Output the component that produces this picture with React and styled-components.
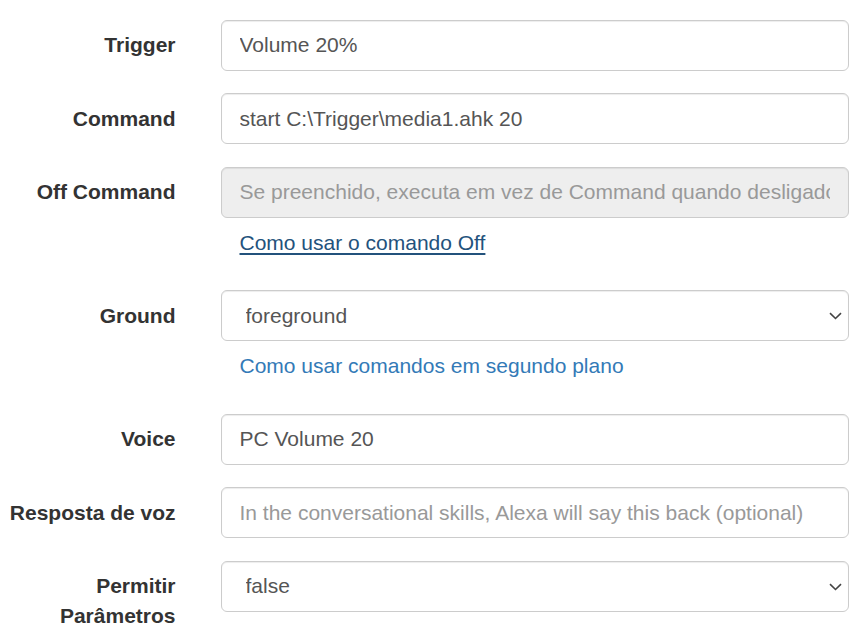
import React from "react";
import styled, { createGlobalStyle } from "styled-components";

const GlobalStyle = createGlobalStyle`
	html, body {
		margin: 0;
		padding: 0;
		background: #fff;
	}
	body {
		font-family: "Liberation Sans", Arial, Helvetica, sans-serif;
		font-size: 21px;
		line-height: 30px;
		color: #333;
	}
	* {
		box-sizing: border-box;
	}
`;

const Form = styled.form`
	padding: 19.5px 13px 0 0;
`;

const FormGroup = styled.div`
	display: grid;
	grid-template-columns: 198px 1fr;
	margin-bottom: 22.5px;
`;

const Label = styled.label`
	padding: 10.5px 22.5px 0 0;
	text-align: right;
	font-weight: 700;
	line-height: 30px;
	color: #333;
`;

const Field = styled.div`
	position: relative;
	padding-left: 22.5px;
`;

const Input = styled.input`
	display: block;
	width: 100%;
	height: 51px;
	padding: 9px 18px;
	font-family: inherit;
	font-size: 21px;
	line-height: 30px;
	color: #555;
	background-color: ${(p) => (p.disabled ? "#eee" : "#fff")};
	border: 1px solid #ccc;
	border-radius: 6px;
	box-shadow: inset 0 1px 1px rgba(0, 0, 0, 0.075);
	outline: none;
	opacity: 1;

	&::placeholder {
		color: #999;
		opacity: 1;
	}
`;

const Select = styled.select`
	display: block;
	width: 100%;
	height: 51px;
	padding: 9px 40px 9px 24px;
	font-family: inherit;
	font-size: 21px;
	line-height: 30px;
	color: #555;
	background-color: #fff;
	border: 1px solid #ccc;
	border-radius: 6px;
	box-shadow: inset 0 1px 1px rgba(0, 0, 0, 0.075);
	outline: none;
	appearance: none;
	-webkit-appearance: none;
`;

const Chevron = styled.svg`
	position: absolute;
	right: 7px;
	top: 22px;
	width: 13px;
	height: 8px;
	pointer-events: none;
`;

const HelpLink = styled.a`
	display: inline-block;
	margin: 10px 0 10px 19px;
	font-size: 21px;
	line-height: 30px;
	color: ${(p) => (p.$visited ? "#23527c" : "#337ab7")};
	text-decoration: ${(p) => (p.$visited ? "underline" : "none")};
	text-underline-offset: 3px;
`;

const SelectField = ({ value, options }) => (
	<Field>
		<Select defaultValue={value}>
			{options.map((o) => (
				<option key={o} value={o}>
					{o}
				</option>
			))}
		</Select>
		<Chevron viewBox="0 0 13 8">
			<path d="M1 1.2 L6.5 6.5 L12 1.2" fill="none" stroke="#444" strokeWidth="1.6" />
		</Chevron>
	</Field>
);

const App = () => {
	return (
		<>
			<GlobalStyle />
			<Form>
				<FormGroup>
					<Label>Trigger</Label>
					<Field>
						<Input defaultValue="Volume 20%" />
					</Field>
				</FormGroup>

				<FormGroup>
					<Label>Command</Label>
					<Field>
						<Input defaultValue="start C:\Trigger\media1.ahk 20" />
					</Field>
				</FormGroup>

				<FormGroup>
					<Label>Off Command</Label>
					<Field>
						<Input
							disabled
							placeholder="Se preenchido, executa em vez de Command quando desligado"
						/>
						<HelpLink href="#off" $visited>
							Como usar o comando Off
						</HelpLink>
					</Field>
				</FormGroup>

				<FormGroup>
					<Label>Ground</Label>
					<div>
						<SelectField value="foreground" options={["foreground", "background"]} />
						<Field>
							<HelpLink href="#ground">Como usar comandos em segundo plano</HelpLink>
						</Field>
					</div>
				</FormGroup>

				<FormGroup>
					<Label>Voice</Label>
					<Field>
						<Input defaultValue="PC Volume 20" />
					</Field>
				</FormGroup>

				<FormGroup>
					<Label>Resposta de voz</Label>
					<Field>
						<Input placeholder="In the conversational skills, Alexa will say this back (optional)" />
					</Field>
				</FormGroup>

				<FormGroup>
					<Label>Permitir Parâmetros</Label>
					<SelectField value="false" options={["false", "true"]} />
				</FormGroup>
			</Form>
		</>
	);
};

export default App;
